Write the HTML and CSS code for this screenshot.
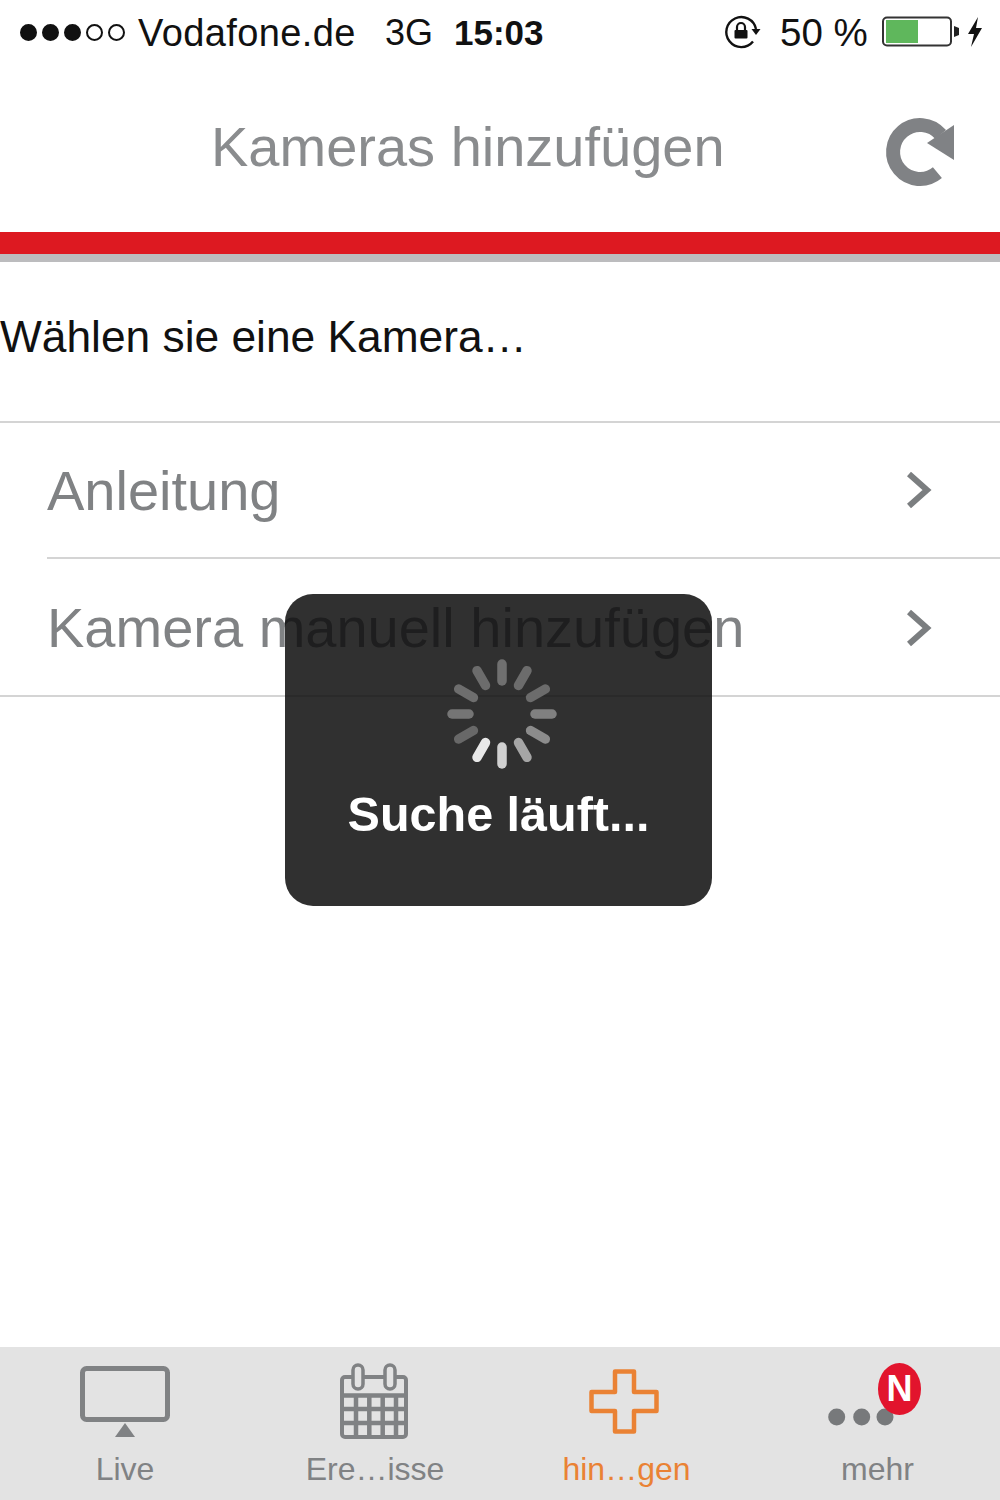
FILE: index.html
```html
<!DOCTYPE html>
<html>
<head>
  <title>Kameras hinzufügen</title>
  <link rel="stylesheet" href="styles.css">
</head>
<body>
  <div class="screen">
    <div class="statusbar">
      <div class="signal">
        <span class="dot on"></span><span class="dot on"></span><span class="dot on"></span><span class="dot"></span><span class="dot"></span>
      </div>
      <span class="carrier">Vodafone.de</span>
      <span class="network">3G</span>
      <span class="clock">15:03</span>
      <svg class="rotlock" width="40" height="40" viewBox="0 0 40 40">
        <path d="M31 29.5 A15 15 0 1 1 34 17" fill="none" stroke="#111" stroke-width="2.4"/>
        <path d="M29.5 17 H38.5 L34 23 Z" fill="#111"/>
        <rect x="12.5" y="18" width="13" height="8.5" rx="1" fill="#111"/>
        <path d="M15 18 V15 A4 4 0 0 1 23 15 V18" fill="none" stroke="#111" stroke-width="2.2"/>
      </svg>
      <span class="percent">50 %</span>
      <svg class="battery" width="78" height="32" viewBox="0 0 78 32">
        <rect x="1" y="1.5" width="68" height="28" rx="4" fill="#fff" stroke="#333" stroke-width="2"/>
        <rect x="4" y="4" width="32" height="23" fill="#5fb75c"/>
        <path d="M72 10 L77 12 V19 L72 21 Z" fill="#222"/>
      </svg>
      <svg class="bolt" width="18" height="32" viewBox="0 0 18 32">
        <path d="M12 1 L2 18 H8 L5 31 L16 12 H10 Z" fill="#111"/>
      </svg>
    </div>

    <div class="navbar">
      <h1 class="title">Kameras hinzufügen</h1>
      <svg class="reload" width="80" height="80" viewBox="0 0 80 80">
        <path d="M60.7 26.6 A27 27 0 1 0 57.4 64.7" fill="none" stroke="#808285" stroke-width="14"/>
        <path d="M74 17 V52 L47 35 Z" fill="#808285"/>
      </svg>
    </div>
    <div class="redbar"></div>

    <div class="intro">Wählen sie eine Kamera…</div>

    <div class="list">
      <div class="list-item">
        <div class="row">
          <span>Anleitung</span>
          <svg class="chevron" width="26" height="38" viewBox="0 0 26 38"><path d="M3 3 L21 19 L3 35" fill="none" stroke="#7b7e80" stroke-width="6"/></svg>
        </div>
      </div>
      <div class="list-item">
        <div class="row last">
          <span>Kamera manuell hinzufügen</span>
          <svg class="chevron" width="26" height="38" viewBox="0 0 26 38"><path d="M3 3 L21 19 L3 35" fill="none" stroke="#7b7e80" stroke-width="6"/></svg>
        </div>
      </div>
    </div>

    <div class="spacer"></div>

    <div class="tabbar">
      <div class="tab">
        <svg width="100" height="80" viewBox="0 0 100 80">
          <rect x="7.5" y="8.5" width="85" height="51" rx="4" fill="none" stroke="#808284" stroke-width="5"/>
          <path d="M50 63 L40 77 H60 Z" fill="#808284"/>
        </svg>
        <span>Live</span>
      </div>
      <div class="tab">
        <svg width="100" height="80" viewBox="0 0 100 80">
          <rect x="17" y="17" width="64" height="60" rx="3" fill="none" stroke="#808284" stroke-width="4"/>
          <path d="M17 35.5 H81 M17 49 H81 M17 63 H81 M31 35 V77 M44.3 35 V77 M57.7 35 V77 M71 35 V77" fill="none" stroke="#808284" stroke-width="4.5"/>
          <rect x="28" y="5" width="10" height="24" rx="5" fill="#e3e3e3" stroke="#808284" stroke-width="3.5"/>
          <rect x="60" y="5" width="10" height="24" rx="5" fill="#e3e3e3" stroke="#808284" stroke-width="3.5"/>
        </svg>
        <span>Ere…isse</span>
      </div>
      <div class="tab active">
        <svg width="100" height="80" viewBox="0 0 100 80">
          <path d="M40 11.5 H59 V32 H81.5 V51 H59 V71.5 H40 V51 H16.5 V32 H40 Z" fill="none" stroke="#ea8234" stroke-width="4.5" stroke-linejoin="round"/>
        </svg>
        <span>hin…gen</span>
      </div>
      <div class="tab more">
        <svg width="100" height="80" viewBox="0 0 100 80">
          <circle cx="11.7" cy="57" r="8.5" fill="#77797b"/>
          <circle cx="36.7" cy="57" r="8.5" fill="#77797b"/>
          <circle cx="60" cy="57" r="8.5" fill="#77797b"/>
        </svg>
        <span>mehr</span>
        <div class="badge">N</div>
      </div>
    </div>

    <div class="hud">
      <svg class="spinner" width="120" height="120" viewBox="-60 -60 120 120">
        <g stroke-width="9.5" stroke-linecap="round">
          <line y1="-50" y2="-33" stroke="#707070"/>
          <line y1="-50" y2="-33" stroke="#6c6c6c" transform="rotate(30)"/>
          <line y1="-50" y2="-33" stroke="#6c6c6c" transform="rotate(60)"/>
          <line y1="-50" y2="-33" stroke="#808080" transform="rotate(90)"/>
          <line y1="-50" y2="-33" stroke="#8c8c8c" transform="rotate(120)"/>
          <line y1="-50" y2="-33" stroke="#a6a6a6" transform="rotate(150)"/>
          <line y1="-50" y2="-33" stroke="#d0d0d0" transform="rotate(180)"/>
          <line y1="-50" y2="-33" stroke="#e8e8e8" transform="rotate(210)"/>
          <line y1="-50" y2="-33" stroke="#686868" transform="rotate(240)"/>
          <line y1="-50" y2="-33" stroke="#757575" transform="rotate(270)"/>
          <line y1="-50" y2="-33" stroke="#6e6e6e" transform="rotate(300)"/>
          <line y1="-50" y2="-33" stroke="#6c6c6c" transform="rotate(330)"/>
        </g>
      </svg>
      <div class="hud-text">Suche läuft...</div>
    </div>
  </div>
</body>
</html>
```

FILE: styles.css
```css
body {
  margin: 0;
  padding: 0;
  background: #fff;
  font-family: "Liberation Sans", Arial, sans-serif;
}
.screen {
  position: relative;
  width: 1000px;
  height: 1500px;
  display: flex;
  flex-direction: column;
  overflow: hidden;
}

.statusbar {
  height: 64px;
  display: flex;
  align-items: center;
  padding-left: 20px;
  color: #111;
  font-size: 38px;
}
.signal {
  display: flex;
  gap: 5px;
  width: 118px;
}
.dot {
  width: 13px;
  height: 13px;
  border: 2px solid #111;
  border-radius: 50%;
  flex: none;
  box-sizing: content-box;
}
.dot.on {
  background: #111;
}
.carrier {
  width: 247px;
  padding-top: 2px;
  letter-spacing: 0.4px;
}
.network {
  width: 69px;
  padding-top: 2px;
  font-size: 36px;
}
.clock {
  width: 268px;
  padding-top: 2px;
  font-size: 35px;
  font-weight: bold;
}
.rotlock {
  width: 40px;
  margin-right: 18px;
}
.percent {
  width: 102px;
  padding-top: 2px;
  font-size: 38.5px;
}
.battery {
  margin-right: 6px;
}

.navbar {
  height: 168px;
  display: flex;
  align-items: center;
  padding: 0 40px 0 211px;
}
.title {
  margin: 0 0 4px;
  font-size: 56px;
  font-weight: normal;
  color: #8a8c8e;
}
.reload {
  margin-left: auto;
}
.redbar {
  height: 22px;
  background: #dd1921;
  border-bottom: 8px solid #bcbcbe;
}

.intro {
  height: 161px;
  box-sizing: border-box;
  padding-top: 50px;
  font-size: 44.3px;
  color: #111;
  border-bottom: 2px solid #d4d4d4;
}

.list {
  border-bottom: 2px solid #d4d4d4;
}
.list-item {
  padding-left: 47px;
}
.row {
  height: 134px;
  display: flex;
  align-items: center;
  justify-content: space-between;
  padding-right: 68px;
  font-size: 56px;
  color: #808284;
  border-bottom: 2px solid #d4d4d4;
}
.row.last {
  height: 136px;
  border-bottom: 0;
}
.row.last .chevron {
  margin-top: 2px;
}

.spacer {
  flex: 1;
}

.tabbar {
  height: 153px;
  background: #e3e3e3;
  display: grid;
  grid-template-columns: repeat(4, 250px);
}
.tab {
  position: relative;
  display: flex;
  flex-direction: column;
  align-items: center;
  padding-top: 13px;
  font-size: 32px;
  color: #808284;
}
.tab span {
  margin-top: 11px;
}
.tab.active {
  color: #ea8234;
}
.tab.active span {
  margin-left: 3px;
}
.tab.more span {
  margin-left: 5px;
}
.badge {
  position: absolute;
  left: 128px;
  top: 16px;
  width: 43px;
  height: 52px;
  border-radius: 50%;
  background: #e2142d;
  color: #fff;
  font-size: 36px;
  font-weight: bold;
  line-height: 52px;
  text-align: center;
}

.hud {
  position: absolute;
  left: 285px;
  top: 594px;
  width: 427px;
  height: 312px;
  box-sizing: border-box;
  padding-top: 60px;
  border-radius: 28px;
  background: rgba(14, 14, 14, 0.86);
  display: flex;
  flex-direction: column;
  align-items: center;
}
.spinner {
  margin-left: 6px;
}
.hud-text {
  margin-top: 12px;
  font-size: 48.5px;
  font-weight: bold;
  color: #fff;
}
```
